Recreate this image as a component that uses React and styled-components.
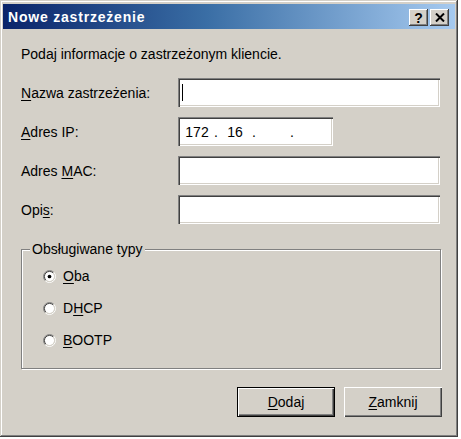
import React from "react";
import styled, { createGlobalStyle } from "styled-components";

const Global = createGlobalStyle`
  html, body { margin: 0; padding: 0; background: #ffffff; }
  body { font-family: "Liberation Sans", Arial, sans-serif; }
  * { box-sizing: border-box; }
`;

const Window = styled.div`
  width: 458px;
  height: 437px;
  background: #d4d0c8;
  padding: 4px 3px 3px 3px;
  display: flex;
  flex-direction: column;
  box-shadow: inset -1px -1px 0 #404040, inset 1px 1px 0 #d4d0c8,
    inset -2px -2px 0 #808080, inset 2px 2px 0 #ffffff;
  font-size: 14px;
  color: #000;
`;

const TitleBar = styled.div`
  height: 25px;
  display: flex;
  align-items: center;
  justify-content: space-between;
  padding: 1px 6px 0 5px;
  background: linear-gradient(to right, #0a246a 0%, #3a6ea5 45%, #a6caf0 100%);
`;

const Title = styled.span`
  color: #fff;
  font-weight: bold;
  font-size: 14px;
  letter-spacing: 0.8px;
`;

const CaptionButtons = styled.div`
  display: flex;
  gap: 2px;
`;

const CaptionButton = styled.div`
  width: 19px;
  height: 17px;
  background: #d4d0c8;
  display: flex;
  align-items: center;
  justify-content: center;
  font-weight: bold;
  font-size: 14px;
  box-shadow: inset -1px -1px 0 #404040, inset 1px 1px 0 #ffffff,
    inset -2px -2px 0 #808080;
  padding-top: 1px;
`;

const Content = styled.div`
  flex: 1;
  display: flex;
  flex-direction: column;
  padding: 17px 14px 0 18px;
`;

const Intro = styled.div`
  line-height: 16px;
`;

const Form = styled.div`
  margin-top: 16px;
  display: grid;
  grid-template-columns: 157px 262px;
  grid-auto-rows: 29px;
  row-gap: 10px;
  align-items: center;
`;

const Label = styled.span`
  line-height: 16px;
`;

const U = styled.span`
  text-decoration: underline;
  text-underline-offset: 2px;
`;

const Field = styled.div`
  height: 29px;
  width: ${(p) => p.$width || "262px"};
  background: #fff;
  display: flex;
  align-items: center;
  box-shadow: inset 1px 1px 0 #808080, inset 2px 2px 0 #404040,
    inset -1px -1px 0 #ffffff, inset -2px -2px 0 #d4d0c8;
  padding: 0 2px 0 ${(p) => p.$pl || "4px"};
`;

const Caret = styled.span`
  width: 1px;
  height: 17px;
  background: #000;
`;

const IpPart = styled.span`
  width: 34px;
  text-align: center;
`;

const IpDot = styled.span`
  width: 4px;
  text-align: center;
`;

const Group = styled.fieldset`
  margin: 17px 0 0 0;
  padding: 0;
  border: 1px solid #808080;
  box-shadow: 1px 1px 0 #ffffff, inset 1px 1px 0 #ffffff;
`;

const Legend = styled.legend`
  margin-left: 8px;
  padding: 0 2px;
  line-height: 16px;
  background: #d4d0c8;
`;

const Options = styled.div`
  display: flex;
  flex-direction: column;
  gap: 12px;
  padding: 9px 0 18px 21px;
`;

const RadioRow = styled.label`
  display: flex;
  align-items: center;
  height: 20px;
  gap: 7px;
`;

const Buttons = styled.div`
  margin-top: 18px;
  display: flex;
  justify-content: flex-end;
  gap: 9px;
  margin-right: -1px;
`;

const Button = styled.div`
  width: 98px;
  height: 30px;
  display: flex;
  align-items: center;
  justify-content: center;
  background: #d4d0c8;
  box-shadow: ${(p) =>
    p.$default
      ? "inset 0 0 0 1px #000, inset 2px 2px 0 #ffffff, inset -2px -2px 0 #404040, inset -3px -3px 0 #808080"
      : "inset 1px 1px 0 #ffffff, inset -1px -1px 0 #404040, inset -2px -2px 0 #808080"};
`;

function Radio({ checked }) {
  return (
    <svg width="13" height="13" viewBox="0 0 14 14">
      <circle cx="7" cy="7" r="5" fill="#fff" />
      <path d="M2.404 11.596 A6.5 6.5 0 0 1 11.596 2.404" fill="none" stroke="#808080" strokeWidth="1" />
      <path d="M11.596 2.404 A6.5 6.5 0 0 1 2.404 11.596" fill="none" stroke="#ffffff" strokeWidth="1" />
      <path d="M3.111 10.889 A5.5 5.5 0 0 1 10.889 3.111" fill="none" stroke="#404040" strokeWidth="1" />
      <path d="M10.889 3.111 A5.5 5.5 0 0 1 3.111 10.889" fill="none" stroke="#d4d0c8" strokeWidth="1" />
      {checked && <circle cx="7" cy="7" r="2" fill="#000" />}
    </svg>
  );
}

function CloseGlyph() {
  return (
    <svg width="10" height="9" viewBox="0 0 10 9">
      <path d="M1 0.5 L9 8.5 M9 0.5 L1 8.5" stroke="#000" strokeWidth="2" />
    </svg>
  );
}

export default function App() {
  return (
    <>
      <Global />
      <Window>
        <TitleBar>
          <Title>Nowe zastrzeżenie</Title>
          <CaptionButtons>
            <CaptionButton>?</CaptionButton>
            <CaptionButton>
              <CloseGlyph />
            </CaptionButton>
          </CaptionButtons>
        </TitleBar>
        <Content>
          <Intro>Podaj informacje o zastrzeżonym kliencie.</Intro>
          <Form>
            <Label>
              <U>N</U>azwa zastrzeżenia:
            </Label>
            <Field>
              <Caret />
            </Field>
            <Label>
              <U>A</U>dres IP:
            </Label>
            <Field $width="155px" $pl="2px">
              <IpPart>172</IpPart>
              <IpDot>.</IpDot>
              <IpPart>16</IpPart>
              <IpDot>.</IpDot>
              <IpPart></IpPart>
              <IpDot>.</IpDot>
              <IpPart></IpPart>
            </Field>
            <Label>
              Adres <U>M</U>AC:
            </Label>
            <Field />
            <Label>
              Opi<U>s</U>:
            </Label>
            <Field />
          </Form>
          <Group>
            <Legend>Obsługiwane typy</Legend>
            <Options>
              <RadioRow>
                <Radio checked />
                <span>
                  <U>O</U>ba
                </span>
              </RadioRow>
              <RadioRow>
                <Radio />
                <span>
                  D<U>H</U>CP
                </span>
              </RadioRow>
              <RadioRow>
                <Radio />
                <span>
                  <U>B</U>OOTP
                </span>
              </RadioRow>
            </Options>
          </Group>
          <Buttons>
            <Button $default>
              <span>
                <U>D</U>odaj
              </span>
            </Button>
            <Button>
              <span>
                <U>Z</U>amknij
              </span>
            </Button>
          </Buttons>
        </Content>
      </Window>
    </>
  );
}
